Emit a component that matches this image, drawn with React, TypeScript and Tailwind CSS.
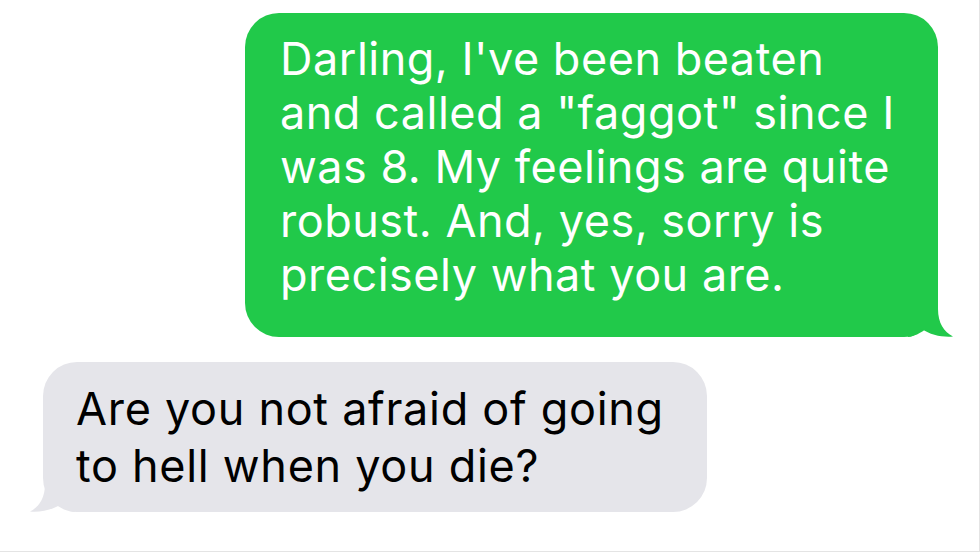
import React from "react";

function Tail({ color, mirror }: { color: string; mirror?: boolean }) {
  return (
    <svg
      width="45"
      height="46"
      viewBox="0 0 45 46"
      className={
        mirror
          ? "absolute bottom-0 left-[-13px] -scale-x-100"
          : "absolute bottom-0 right-[-15px]"
      }
      aria-hidden="true"
    >
      <path
        d="M0,46 L0,0 L30,0 L30,18 C30,32 36,41 45,45.5 C35,46.5 22,44 14,38 C10,42 6,46 0,46 Z"
        fill={color}
      />
    </svg>
  );
}

export default function App() {
  const green = [
    "Darling, I've been beaten",
    'and called a "faggot" since I',
    "was 8. My feelings are quite",
    "robust. And, yes, sorry is",
    "precisely what you are.",
  ];
  const gray = ["Are you not afraid of going", "to hell when you die?"];
  return (
    <div
      className="w-[980px] h-[552px] bg-white border-r border-b border-[#e4e4e4] flex flex-col overflow-hidden"
      style={{ fontFamily: "Inter, 'Liberation Sans', sans-serif" }}
    >
      <div className="self-end mr-[41px] mt-[13px] relative">
        <div className="w-[693px] h-[324px] bg-[#21c94a] rounded-[34px] pl-[35px] pt-[19px] text-white text-[45px] leading-[54px] tracking-[0.5px]">
          {green.map((l) => (
            <div key={l} className="whitespace-nowrap">
              {l}
            </div>
          ))}
        </div>
        <Tail color="#21c94a" />
      </div>
      <div className="self-start ml-[43px] mt-[25px] relative">
        <div className="w-[664px] h-[150px] bg-[#e5e5ea] rounded-[34px] pl-[33px] pt-[18px] text-black text-[45px] leading-[57px] tracking-[0.7px]">
          {gray.map((l) => (
            <div key={l} className="whitespace-nowrap">
              {l}
            </div>
          ))}
        </div>
        <Tail color="#e5e5ea" mirror />
      </div>
    </div>
  );
}
